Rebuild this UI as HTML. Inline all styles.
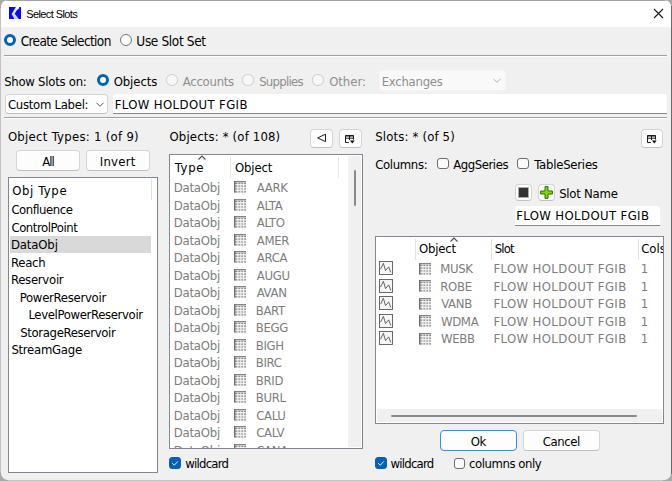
<!DOCTYPE html><html><head><meta charset="utf-8"><title>Select Slots</title><style>
*{box-sizing:border-box;margin:0;padding:0}
html,body{width:672px;height:481px;overflow:hidden;background:#a8a8a8}
body{font-family:"DejaVu Sans Condensed","DejaVu Sans","Liberation Sans",sans-serif;font-size:13px;color:#000;position:relative}
.win{position:absolute;left:1px;top:0;width:670px;height:480px;background:#f0f0f0;border-radius:7px;overflow:hidden}
.tb{position:absolute;left:0;top:0;width:100%;height:27px;background:#fff}
.t{position:absolute;white-space:nowrap;line-height:16px;height:16px}
.g{color:#7d7d7d}
.dis{color:#8f8f8f}
.sep{position:absolute;height:2px;border-top:1px solid #a0a0a0;border-bottom:1px solid #fff}
.radio{position:absolute;width:12px;height:12px;border-radius:50%;border:1px solid #767676;background:#fbfbfb}
.radio.on{border:3.9px solid #0560b6;background:#fff}
.radio.off{border-color:#cdcdcd;background:#f7f7f7;width:11.5px;height:11.5px}
.cb{position:absolute;width:11.5px;height:11.5px;border:1px solid #6c6c6c;border-radius:3px;background:#fafafa}
.cb.on{background:#0560b6;border-color:#0560b6}
.btn{position:absolute;background:#fdfdfd;border:1px solid #d4d4d4;border-bottom-color:#c0c0c0;border-radius:4px;text-align:center}
.box{position:absolute;background:#fff;border:1px solid #828790}
.le{position:absolute;background:#fff;border-bottom:1px solid #868686;border-radius:3px 3px 0 0}
</style></head><body><div class="win">
<div class="tb"></div><div style="position:absolute;left:0;top:0;width:100%;height:1px;background:#a2a2a2"></div>
<svg style="position:absolute;left:7.5px;top:6.5px" width="12.5" height="12.5" viewBox="0 0 12.5 12.5"><rect width="12.5" height="12.5" fill="#0808ff"/><defs><linearGradient id="rg" x1="0" y1="0" x2="0" y2="1"><stop offset="0" stop-color="#ffffff"/><stop offset="1" stop-color="#c4c4ff"/></linearGradient></defs><path d="M6.9 0 L10.3 0 L10 1.6 L7.6 3.4 L5.7 6.8 L10.3 12.5 L5.6 12.5 L2.6 7 Z" fill="url(#rg)"/></svg>
<svg style="position:absolute;left:652px;top:8px" width="11" height="11" viewBox="0 0 11 11"><path d="M1 1 L10 10 M10 1 L1 10" stroke="#1a1a1a" stroke-width="1.1" fill="none"/></svg>
<div class="t " style="left:25.15px;top:5.7px;font-size:11px;font-family:'Liberation Sans',sans-serif;letter-spacing:-0.58px;">Select Slots</div>
<div class="radio on" style="left:3px;top:34px"></div>
<div class="t " style="left:19.65px;top:32.9px;font-size:13.5px;letter-spacing:-0.63px;">Create Selection</div>
<div class="radio " style="left:119px;top:34px"></div>
<div class="t " style="left:135.35px;top:32.9px;font-size:13.5px;letter-spacing:-0.36px;">Use Slot Set</div>
<div class="sep" style="left:3px;top:55px;width:663px"></div>
<div class="t " style="left:3.15px;top:73.5px;letter-spacing:-0.26px;">Show Slots on:</div>
<div class="radio on" style="left:96px;top:74px"></div>
<div class="t " style="left:112.65px;top:73.5px;letter-spacing:-0.08px;">Objects</div>
<div class="radio off" style="left:165px;top:74px"></div>
<div class="t dis" style="left:181.75px;top:73.5px;letter-spacing:-0.26px;">Accounts</div>
<div class="radio off" style="left:241px;top:74px"></div>
<div class="t dis" style="left:258.15px;top:73.5px;letter-spacing:-0.72px;">Supplies</div>
<div class="radio off" style="left:311px;top:74px"></div>
<div class="t dis" style="left:328.15px;top:73.5px;letter-spacing:-0.04px;">Other:</div>
<div class="btn" style="left:378px;top:70px;width:126.5px;height:20.5px;background:#f9f9f9;border-color:#f4f4f4;border-radius:3px"></div>
<div class="t dis" style="left:380.7px;top:73.5px;letter-spacing:-0.25px;">Exchanges</div>
<svg style="position:absolute;left:492px;top:78px" width="9" height="6" viewBox="0 0 9 6"><path d="M0.5 0.8 L4 4.3 L7.5 0.8" stroke="#b0b0b0" stroke-width="1" fill="none"/></svg>
<div class="btn" style="left:4px;top:93.5px;width:103px;height:20.5px"></div>
<div class="t " style="left:6.9px;top:97px;letter-spacing:-0.28px;">Custom Label:</div>
<svg style="position:absolute;left:95px;top:102px" width="9" height="6" viewBox="0 0 9 6"><path d="M0.5 0.8 L4 4.3 L7.5 0.8" stroke="#505050" stroke-width="1" fill="none"/></svg>
<div class="le" style="left:112px;top:94px;width:554px;height:20px"></div>
<div class="t " style="left:113.7px;top:97px;letter-spacing:0.38px;">FLOW HOLDOUT FGIB</div>
<div class="sep" style="left:3px;top:117px;width:663px"></div>
<div class="t " style="left:6.9px;top:129.25px;letter-spacing:0.28px;">Object Types: 1 (of 9)</div>
<div class="t " style="left:168.45px;top:129.25px;letter-spacing:0.16px;">Objects: * (of 108)</div>
<div class="t " style="left:374.15px;top:129.25px;letter-spacing:0.17px;">Slots: * (of 5)</div>
<div class="btn" style="left:309px;top:129px;width:22.5px;height:19px"><svg width="11" height="11" viewBox="0 0 11 11" style="position:absolute;left:5px;top:3px"><path d="M9.5 1.2 L1.6 4.9 L9.5 8.6 Z" stroke="#222" stroke-width="1" fill="none"/></svg></div>
<div class="btn" style="left:338px;top:129px;width:23px;height:19px"><svg width="10" height="9" viewBox="0 0 10 9" style="position:absolute;left:5px;top:5px"><path d="M0.5 7.5 V0.5 H8.5 V4.6 M0.5 3.2 H8.5 M4.5 0.5 V5 M0.5 7.5 H3.8" stroke="#1c1c1c" stroke-width="1" fill="none"/><path d="M0 1.2 H9" stroke="#1c1c1c" stroke-width="0.8"/><path d="M4.9 5.5 L9.7 5.5 L7.3 8.5 Z" fill="#111"/></svg></div>
<div class="btn" style="left:640px;top:129px;width:22px;height:19px"><svg width="10" height="9" viewBox="0 0 10 9" style="position:absolute;left:5px;top:5px"><path d="M0.5 7.5 V0.5 H8.5 V4.6 M0.5 3.2 H8.5 M4.5 0.5 V5 M0.5 7.5 H3.8" stroke="#1c1c1c" stroke-width="1" fill="none"/><path d="M0 1.2 H9" stroke="#1c1c1c" stroke-width="0.8"/><path d="M4.9 5.5 L9.7 5.5 L7.3 8.5 Z" fill="#111"/></svg></div>
<div class="btn" style="left:15px;top:150px;width:64px;height:21px"></div>
<div class="t " style="left:41.25px;top:153.5px;letter-spacing:-1.03px;">All</div>
<div class="btn" style="left:85px;top:150px;width:64px;height:21px"></div>
<div class="t " style="left:98.7px;top:153.5px;letter-spacing:0.27px;">Invert</div>
<div class="box" style="left:7px;top:177px;width:150px;height:296px"></div>
<div style="position:absolute;left:150px;top:179px;width:1px;height:21px;background:#e0e0e0"></div>
<div class="t " style="left:11.15px;top:182.5px;letter-spacing:0.6px;">Obj Type</div>
<div class="t " style="left:10.4px;top:202.2px;letter-spacing:-0.48px;">Confluence</div>
<div class="t " style="left:10.4px;top:219.7px;letter-spacing:-0.43px;">ControlPoint</div>
<div style="position:absolute;left:9px;top:236px;width:141px;height:17px;background:#d9d9d9"></div>
<div class="t " style="left:9.95px;top:237.2px;letter-spacing:-0.14px;">DataObj</div>
<div class="t " style="left:9.95px;top:254.7px;letter-spacing:-0.26px;">Reach</div>
<div class="t " style="left:9.95px;top:272.2px;letter-spacing:-0.28px;">Reservoir</div>
<div class="t " style="left:18.7px;top:289.7px;letter-spacing:-0.29px;">PowerReservoir</div>
<div class="t " style="left:27.45px;top:307.2px;letter-spacing:-0.36px;">LevelPowerReservoir</div>
<div class="t " style="left:19.15px;top:324.7px;letter-spacing:-0.34px;">StorageReservoir</div>
<div class="t " style="left:10.4px;top:342.2px;letter-spacing:-0.27px;">StreamGage</div>
<div class="box" style="left:168px;top:154px;width:194px;height:295px;overflow:hidden">
<div style="position:absolute;left:178px;top:1px;width:13px;height:291px;background:#f0f0f0"></div>
<div style="position:absolute;left:184px;top:15px;width:2px;height:36px;background:#8a8a8a;border-radius:1px"></div>
<div style="position:absolute;left:60px;top:2px;width:1px;height:21px;background:#e4e4e4"></div>
<div style="position:absolute;left:168px;top:2px;width:1px;height:21px;background:#e4e4e4"></div>
<svg style="position:absolute;left:28px;top:0px" width="9" height="5" viewBox="0 0 9 5"><path d="M0.5 4.5 L4 1 L7.5 4.5" stroke="#4a4a4a" stroke-width="1.1" fill="none"/></svg>
<div class="t g" style="left:3.7px;top:25px;letter-spacing:-0.19px;">DataObj</div>
<svg style="position:absolute;left:64.2px;top:26.1px" width="12" height="12" viewBox="0 0 12 12"><rect x="0" y="0" width="12" height="11.6" fill="#e9e9e9"/><path d="M1 2.4 H12 M1 5.2 H12 M1 8 H12 M1 10.8 H12" stroke="#8e8e8e" stroke-width="1.2" fill="none"/><path d="M3.9 1.4 V12 M6.8 1.4 V12 M9.6 1.4 V12" stroke="#fafafa" stroke-width="0.9"/><path d="M0 0.6 H12" stroke="#858585" stroke-width="1.2"/><path d="M0.7 0 V11.6" stroke="#707070" stroke-width="1.4"/></svg>
<div class="t g" style="left:86.75px;top:25px;letter-spacing:-0.3px;">AARK</div>
<div class="t g" style="left:3.7px;top:42.5px;letter-spacing:-0.19px;">DataObj</div>
<svg style="position:absolute;left:64.2px;top:43.6px" width="12" height="12" viewBox="0 0 12 12"><rect x="0" y="0" width="12" height="11.6" fill="#e9e9e9"/><path d="M1 2.4 H12 M1 5.2 H12 M1 8 H12 M1 10.8 H12" stroke="#8e8e8e" stroke-width="1.2" fill="none"/><path d="M3.9 1.4 V12 M6.8 1.4 V12 M9.6 1.4 V12" stroke="#fafafa" stroke-width="0.9"/><path d="M0 0.6 H12" stroke="#858585" stroke-width="1.2"/><path d="M0.7 0 V11.6" stroke="#707070" stroke-width="1.4"/></svg>
<div class="t g" style="left:86.75px;top:42.5px;letter-spacing:-0.3px;">ALTA</div>
<div class="t g" style="left:3.7px;top:60px;letter-spacing:-0.19px;">DataObj</div>
<svg style="position:absolute;left:64.2px;top:61.1px" width="12" height="12" viewBox="0 0 12 12"><rect x="0" y="0" width="12" height="11.6" fill="#e9e9e9"/><path d="M1 2.4 H12 M1 5.2 H12 M1 8 H12 M1 10.8 H12" stroke="#8e8e8e" stroke-width="1.2" fill="none"/><path d="M3.9 1.4 V12 M6.8 1.4 V12 M9.6 1.4 V12" stroke="#fafafa" stroke-width="0.9"/><path d="M0 0.6 H12" stroke="#858585" stroke-width="1.2"/><path d="M0.7 0 V11.6" stroke="#707070" stroke-width="1.4"/></svg>
<div class="t g" style="left:86.75px;top:60px;letter-spacing:-0.3px;">ALTO</div>
<div class="t g" style="left:3.7px;top:77.5px;letter-spacing:-0.19px;">DataObj</div>
<svg style="position:absolute;left:64.2px;top:78.6px" width="12" height="12" viewBox="0 0 12 12"><rect x="0" y="0" width="12" height="11.6" fill="#e9e9e9"/><path d="M1 2.4 H12 M1 5.2 H12 M1 8 H12 M1 10.8 H12" stroke="#8e8e8e" stroke-width="1.2" fill="none"/><path d="M3.9 1.4 V12 M6.8 1.4 V12 M9.6 1.4 V12" stroke="#fafafa" stroke-width="0.9"/><path d="M0 0.6 H12" stroke="#858585" stroke-width="1.2"/><path d="M0.7 0 V11.6" stroke="#707070" stroke-width="1.4"/></svg>
<div class="t g" style="left:86.75px;top:77.5px;letter-spacing:-0.3px;">AMER</div>
<div class="t g" style="left:3.7px;top:95px;letter-spacing:-0.19px;">DataObj</div>
<svg style="position:absolute;left:64.2px;top:96.1px" width="12" height="12" viewBox="0 0 12 12"><rect x="0" y="0" width="12" height="11.6" fill="#e9e9e9"/><path d="M1 2.4 H12 M1 5.2 H12 M1 8 H12 M1 10.8 H12" stroke="#8e8e8e" stroke-width="1.2" fill="none"/><path d="M3.9 1.4 V12 M6.8 1.4 V12 M9.6 1.4 V12" stroke="#fafafa" stroke-width="0.9"/><path d="M0 0.6 H12" stroke="#858585" stroke-width="1.2"/><path d="M0.7 0 V11.6" stroke="#707070" stroke-width="1.4"/></svg>
<div class="t g" style="left:86.75px;top:95px;letter-spacing:-0.3px;">ARCA</div>
<div class="t g" style="left:3.7px;top:112.5px;letter-spacing:-0.19px;">DataObj</div>
<svg style="position:absolute;left:64.2px;top:113.6px" width="12" height="12" viewBox="0 0 12 12"><rect x="0" y="0" width="12" height="11.6" fill="#e9e9e9"/><path d="M1 2.4 H12 M1 5.2 H12 M1 8 H12 M1 10.8 H12" stroke="#8e8e8e" stroke-width="1.2" fill="none"/><path d="M3.9 1.4 V12 M6.8 1.4 V12 M9.6 1.4 V12" stroke="#fafafa" stroke-width="0.9"/><path d="M0 0.6 H12" stroke="#858585" stroke-width="1.2"/><path d="M0.7 0 V11.6" stroke="#707070" stroke-width="1.4"/></svg>
<div class="t g" style="left:86.75px;top:112.5px;letter-spacing:-0.3px;">AUGU</div>
<div class="t g" style="left:3.7px;top:130px;letter-spacing:-0.19px;">DataObj</div>
<svg style="position:absolute;left:64.2px;top:131.1px" width="12" height="12" viewBox="0 0 12 12"><rect x="0" y="0" width="12" height="11.6" fill="#e9e9e9"/><path d="M1 2.4 H12 M1 5.2 H12 M1 8 H12 M1 10.8 H12" stroke="#8e8e8e" stroke-width="1.2" fill="none"/><path d="M3.9 1.4 V12 M6.8 1.4 V12 M9.6 1.4 V12" stroke="#fafafa" stroke-width="0.9"/><path d="M0 0.6 H12" stroke="#858585" stroke-width="1.2"/><path d="M0.7 0 V11.6" stroke="#707070" stroke-width="1.4"/></svg>
<div class="t g" style="left:86.75px;top:130px;letter-spacing:-0.3px;">AVAN</div>
<div class="t g" style="left:3.7px;top:147.5px;letter-spacing:-0.19px;">DataObj</div>
<svg style="position:absolute;left:64.2px;top:148.6px" width="12" height="12" viewBox="0 0 12 12"><rect x="0" y="0" width="12" height="11.6" fill="#e9e9e9"/><path d="M1 2.4 H12 M1 5.2 H12 M1 8 H12 M1 10.8 H12" stroke="#8e8e8e" stroke-width="1.2" fill="none"/><path d="M3.9 1.4 V12 M6.8 1.4 V12 M9.6 1.4 V12" stroke="#fafafa" stroke-width="0.9"/><path d="M0 0.6 H12" stroke="#858585" stroke-width="1.2"/><path d="M0.7 0 V11.6" stroke="#707070" stroke-width="1.4"/></svg>
<div class="t g" style="left:85.7px;top:147.5px;letter-spacing:-0.3px;">BART</div>
<div class="t g" style="left:3.7px;top:165px;letter-spacing:-0.19px;">DataObj</div>
<svg style="position:absolute;left:64.2px;top:166.1px" width="12" height="12" viewBox="0 0 12 12"><rect x="0" y="0" width="12" height="11.6" fill="#e9e9e9"/><path d="M1 2.4 H12 M1 5.2 H12 M1 8 H12 M1 10.8 H12" stroke="#8e8e8e" stroke-width="1.2" fill="none"/><path d="M3.9 1.4 V12 M6.8 1.4 V12 M9.6 1.4 V12" stroke="#fafafa" stroke-width="0.9"/><path d="M0 0.6 H12" stroke="#858585" stroke-width="1.2"/><path d="M0.7 0 V11.6" stroke="#707070" stroke-width="1.4"/></svg>
<div class="t g" style="left:85.7px;top:165px;letter-spacing:-0.3px;">BEGG</div>
<div class="t g" style="left:3.7px;top:182.5px;letter-spacing:-0.19px;">DataObj</div>
<svg style="position:absolute;left:64.2px;top:183.6px" width="12" height="12" viewBox="0 0 12 12"><rect x="0" y="0" width="12" height="11.6" fill="#e9e9e9"/><path d="M1 2.4 H12 M1 5.2 H12 M1 8 H12 M1 10.8 H12" stroke="#8e8e8e" stroke-width="1.2" fill="none"/><path d="M3.9 1.4 V12 M6.8 1.4 V12 M9.6 1.4 V12" stroke="#fafafa" stroke-width="0.9"/><path d="M0 0.6 H12" stroke="#858585" stroke-width="1.2"/><path d="M0.7 0 V11.6" stroke="#707070" stroke-width="1.4"/></svg>
<div class="t g" style="left:85.7px;top:182.5px;letter-spacing:-0.3px;">BIGH</div>
<div class="t g" style="left:3.7px;top:200px;letter-spacing:-0.19px;">DataObj</div>
<svg style="position:absolute;left:64.2px;top:201.1px" width="12" height="12" viewBox="0 0 12 12"><rect x="0" y="0" width="12" height="11.6" fill="#e9e9e9"/><path d="M1 2.4 H12 M1 5.2 H12 M1 8 H12 M1 10.8 H12" stroke="#8e8e8e" stroke-width="1.2" fill="none"/><path d="M3.9 1.4 V12 M6.8 1.4 V12 M9.6 1.4 V12" stroke="#fafafa" stroke-width="0.9"/><path d="M0 0.6 H12" stroke="#858585" stroke-width="1.2"/><path d="M0.7 0 V11.6" stroke="#707070" stroke-width="1.4"/></svg>
<div class="t g" style="left:85.7px;top:200px;letter-spacing:-0.3px;">BIRC</div>
<div class="t g" style="left:3.7px;top:217.5px;letter-spacing:-0.19px;">DataObj</div>
<svg style="position:absolute;left:64.2px;top:218.6px" width="12" height="12" viewBox="0 0 12 12"><rect x="0" y="0" width="12" height="11.6" fill="#e9e9e9"/><path d="M1 2.4 H12 M1 5.2 H12 M1 8 H12 M1 10.8 H12" stroke="#8e8e8e" stroke-width="1.2" fill="none"/><path d="M3.9 1.4 V12 M6.8 1.4 V12 M9.6 1.4 V12" stroke="#fafafa" stroke-width="0.9"/><path d="M0 0.6 H12" stroke="#858585" stroke-width="1.2"/><path d="M0.7 0 V11.6" stroke="#707070" stroke-width="1.4"/></svg>
<div class="t g" style="left:85.7px;top:217.5px;letter-spacing:-0.3px;">BRID</div>
<div class="t g" style="left:3.7px;top:235px;letter-spacing:-0.19px;">DataObj</div>
<svg style="position:absolute;left:64.2px;top:236.1px" width="12" height="12" viewBox="0 0 12 12"><rect x="0" y="0" width="12" height="11.6" fill="#e9e9e9"/><path d="M1 2.4 H12 M1 5.2 H12 M1 8 H12 M1 10.8 H12" stroke="#8e8e8e" stroke-width="1.2" fill="none"/><path d="M3.9 1.4 V12 M6.8 1.4 V12 M9.6 1.4 V12" stroke="#fafafa" stroke-width="0.9"/><path d="M0 0.6 H12" stroke="#858585" stroke-width="1.2"/><path d="M0.7 0 V11.6" stroke="#707070" stroke-width="1.4"/></svg>
<div class="t g" style="left:85.7px;top:235px;letter-spacing:-0.3px;">BURL</div>
<div class="t g" style="left:3.7px;top:252.5px;letter-spacing:-0.19px;">DataObj</div>
<svg style="position:absolute;left:64.2px;top:253.6px" width="12" height="12" viewBox="0 0 12 12"><rect x="0" y="0" width="12" height="11.6" fill="#e9e9e9"/><path d="M1 2.4 H12 M1 5.2 H12 M1 8 H12 M1 10.8 H12" stroke="#8e8e8e" stroke-width="1.2" fill="none"/><path d="M3.9 1.4 V12 M6.8 1.4 V12 M9.6 1.4 V12" stroke="#fafafa" stroke-width="0.9"/><path d="M0 0.6 H12" stroke="#858585" stroke-width="1.2"/><path d="M0.7 0 V11.6" stroke="#707070" stroke-width="1.4"/></svg>
<div class="t g" style="left:86.15px;top:252.5px;letter-spacing:-0.3px;">CALU</div>
<div class="t g" style="left:3.7px;top:270px;letter-spacing:-0.19px;">DataObj</div>
<svg style="position:absolute;left:64.2px;top:271.1px" width="12" height="12" viewBox="0 0 12 12"><rect x="0" y="0" width="12" height="11.6" fill="#e9e9e9"/><path d="M1 2.4 H12 M1 5.2 H12 M1 8 H12 M1 10.8 H12" stroke="#8e8e8e" stroke-width="1.2" fill="none"/><path d="M3.9 1.4 V12 M6.8 1.4 V12 M9.6 1.4 V12" stroke="#fafafa" stroke-width="0.9"/><path d="M0 0.6 H12" stroke="#858585" stroke-width="1.2"/><path d="M0.7 0 V11.6" stroke="#707070" stroke-width="1.4"/></svg>
<div class="t g" style="left:86.15px;top:270px;letter-spacing:-0.3px;">CALV</div>
<div class="t g" style="left:3.7px;top:287.5px;letter-spacing:-0.19px;">DataObj</div>
<svg style="position:absolute;left:64.2px;top:288.6px" width="12" height="12" viewBox="0 0 12 12"><rect x="0" y="0" width="12" height="11.6" fill="#e9e9e9"/><path d="M1 2.4 H12 M1 5.2 H12 M1 8 H12 M1 10.8 H12" stroke="#8e8e8e" stroke-width="1.2" fill="none"/><path d="M3.9 1.4 V12 M6.8 1.4 V12 M9.6 1.4 V12" stroke="#fafafa" stroke-width="0.9"/><path d="M0 0.6 H12" stroke="#858585" stroke-width="1.2"/><path d="M0.7 0 V11.6" stroke="#707070" stroke-width="1.4"/></svg>
<div class="t g" style="left:86.15px;top:287.5px;letter-spacing:-0.3px;">CANA</div>
</div>
<div class="t " style="left:173.75px;top:159.5px;letter-spacing:0.71px;">Type</div>
<div class="t " style="left:234.05px;top:159.5px;letter-spacing:-0.18px;">Object</div>
<div class="cb on" style="left:168px;top:457.2px"><svg width="10" height="10" viewBox="0 0 10 10" style="position:absolute;left:0;top:0"><path d="M2.2 5.2 L4.3 7.2 L7.8 3.4" stroke="#e8f0fa" stroke-width="1" fill="none"/></svg></div>
<div class="t " style="left:184.3px;top:456.4px;letter-spacing:-0.77px;">wildcard</div>
<div class="t " style="left:374.15px;top:157.25px;letter-spacing:-0.34px;">Columns:</div>
<div class="cb" style="left:436.0px;top:157.8px"></div>
<div class="t " style="left:452.25px;top:157.25px;letter-spacing:-0.45px;">AggSeries</div>
<div class="cb" style="left:516.0px;top:157.8px"></div>
<div class="t " style="left:533.25px;top:157.25px;letter-spacing:-0.23px;">TableSeries</div>
<div class="btn" style="left:514px;top:184px;width:17px;height:17px"><div style="position:absolute;left:2px;top:2px;width:11px;height:11px;background:#333;border:1.5px solid #aaa"></div></div>
<div class="btn" style="left:537px;top:184px;width:17px;height:17px"><svg width="13" height="13" viewBox="0 0 13 13" style="position:absolute;left:1px;top:1.2px"><path d="M5 0.6 H8 V5 H12.4 V8 H8 V12.4 H5 V8 H0.6 V5 H5 Z" fill="#86d400" stroke="#2a6e12" stroke-width="1"/></svg></div>
<div class="t " style="left:558.15px;top:185.5px;letter-spacing:-0.24px;">Slot Name</div>
<div class="le" style="left:513.5px;top:206px;width:145px;height:19.5px"></div>
<div class="t " style="left:515.2px;top:208px;letter-spacing:0.38px;">FLOW HOLDOUT FGIB</div>
<div class="box" style="left:374px;top:235.5px;width:289px;height:188px;overflow:hidden">
<div style="position:absolute;left:1px;top:172.5px;width:285px;height:13px;background:#f0f0f0"></div>
<div style="position:absolute;left:15px;top:178.5px;width:246px;height:2px;background:#8a8a8a;border-radius:1px"></div>
<svg style="position:absolute;left:74px;top:0px" width="9" height="5" viewBox="0 0 9 5"><path d="M0.5 4.5 L4 1 L7.5 4.5" stroke="#4a4a4a" stroke-width="1.1" fill="none"/></svg>
<div style="position:absolute;left:39px;top:2px;width:1px;height:21px;background:#e2e2e2"></div>
<div style="position:absolute;left:115px;top:2px;width:1px;height:21px;background:#e2e2e2"></div>
<div style="position:absolute;left:261.5px;top:2px;width:1px;height:21px;background:#e2e2e2"></div>
<svg style="position:absolute;left:2.9px;top:24.5px" width="14" height="14" viewBox="0 0 14 14"><rect x="0.5" y="0.5" width="13" height="13" fill="#f6f6f6" stroke="#5a5a5a" stroke-width="0.9"/><path d="M1.5 8.2 L4.4 2.3 L6.5 9.6 L9.7 5.9 L11.75 11.4" stroke="#555" stroke-width="0.9" fill="none"/></svg>
<svg style="position:absolute;left:42.6px;top:26.1px" width="12" height="12" viewBox="0 0 12 12"><rect x="0" y="0" width="12" height="11.6" fill="#e9e9e9"/><path d="M1 2.4 H12 M1 5.2 H12 M1 8 H12 M1 10.8 H12" stroke="#8e8e8e" stroke-width="1.2" fill="none"/><path d="M3.9 1.4 V12 M6.8 1.4 V12 M9.6 1.4 V12" stroke="#fafafa" stroke-width="0.9"/><path d="M0 0.6 H12" stroke="#858585" stroke-width="1.2"/><path d="M0.7 0 V11.6" stroke="#707070" stroke-width="1.4"/></svg>
<div class="t g" style="left:64.2px;top:24.5px;letter-spacing:-0.3px;">MUSK</div>
<div class="t g" style="left:117.45px;top:24.5px;letter-spacing:0.38px;">FLOW HOLDOUT FGIB</div>
<div class="t g" style="left:264.7px;top:24.5px;">1</div>
<svg style="position:absolute;left:2.9px;top:42px" width="14" height="14" viewBox="0 0 14 14"><rect x="0.5" y="0.5" width="13" height="13" fill="#f6f6f6" stroke="#5a5a5a" stroke-width="0.9"/><path d="M1.5 8.2 L4.4 2.3 L6.5 9.6 L9.7 5.9 L11.75 11.4" stroke="#555" stroke-width="0.9" fill="none"/></svg>
<svg style="position:absolute;left:42.6px;top:43.6px" width="12" height="12" viewBox="0 0 12 12"><rect x="0" y="0" width="12" height="11.6" fill="#e9e9e9"/><path d="M1 2.4 H12 M1 5.2 H12 M1 8 H12 M1 10.8 H12" stroke="#8e8e8e" stroke-width="1.2" fill="none"/><path d="M3.9 1.4 V12 M6.8 1.4 V12 M9.6 1.4 V12" stroke="#fafafa" stroke-width="0.9"/><path d="M0 0.6 H12" stroke="#858585" stroke-width="1.2"/><path d="M0.7 0 V11.6" stroke="#707070" stroke-width="1.4"/></svg>
<div class="t g" style="left:64.2px;top:42px;letter-spacing:-0.3px;">ROBE</div>
<div class="t g" style="left:117.45px;top:42px;letter-spacing:0.38px;">FLOW HOLDOUT FGIB</div>
<div class="t g" style="left:264.7px;top:42px;">1</div>
<svg style="position:absolute;left:2.9px;top:59.5px" width="14" height="14" viewBox="0 0 14 14"><rect x="0.5" y="0.5" width="13" height="13" fill="#f6f6f6" stroke="#5a5a5a" stroke-width="0.9"/><path d="M1.5 8.2 L4.4 2.3 L6.5 9.6 L9.7 5.9 L11.75 11.4" stroke="#555" stroke-width="0.9" fill="none"/></svg>
<svg style="position:absolute;left:42.6px;top:61.1px" width="12" height="12" viewBox="0 0 12 12"><rect x="0" y="0" width="12" height="11.6" fill="#e9e9e9"/><path d="M1 2.4 H12 M1 5.2 H12 M1 8 H12 M1 10.8 H12" stroke="#8e8e8e" stroke-width="1.2" fill="none"/><path d="M3.9 1.4 V12 M6.8 1.4 V12 M9.6 1.4 V12" stroke="#fafafa" stroke-width="0.9"/><path d="M0 0.6 H12" stroke="#858585" stroke-width="1.2"/><path d="M0.7 0 V11.6" stroke="#707070" stroke-width="1.4"/></svg>
<div class="t g" style="left:65.25px;top:59.5px;letter-spacing:-0.3px;">VANB</div>
<div class="t g" style="left:117.45px;top:59.5px;letter-spacing:0.38px;">FLOW HOLDOUT FGIB</div>
<div class="t g" style="left:264.7px;top:59.5px;">1</div>
<svg style="position:absolute;left:2.9px;top:77px" width="14" height="14" viewBox="0 0 14 14"><rect x="0.5" y="0.5" width="13" height="13" fill="#f6f6f6" stroke="#5a5a5a" stroke-width="0.9"/><path d="M1.5 8.2 L4.4 2.3 L6.5 9.6 L9.7 5.9 L11.75 11.4" stroke="#555" stroke-width="0.9" fill="none"/></svg>
<svg style="position:absolute;left:42.6px;top:78.6px" width="12" height="12" viewBox="0 0 12 12"><rect x="0" y="0" width="12" height="11.6" fill="#e9e9e9"/><path d="M1 2.4 H12 M1 5.2 H12 M1 8 H12 M1 10.8 H12" stroke="#8e8e8e" stroke-width="1.2" fill="none"/><path d="M3.9 1.4 V12 M6.8 1.4 V12 M9.6 1.4 V12" stroke="#fafafa" stroke-width="0.9"/><path d="M0 0.6 H12" stroke="#858585" stroke-width="1.2"/><path d="M0.7 0 V11.6" stroke="#707070" stroke-width="1.4"/></svg>
<div class="t g" style="left:64.9px;top:77px;letter-spacing:-0.3px;">WDMA</div>
<div class="t g" style="left:117.45px;top:77px;letter-spacing:0.38px;">FLOW HOLDOUT FGIB</div>
<div class="t g" style="left:264.7px;top:77px;">1</div>
<svg style="position:absolute;left:2.9px;top:94.5px" width="14" height="14" viewBox="0 0 14 14"><rect x="0.5" y="0.5" width="13" height="13" fill="#f6f6f6" stroke="#5a5a5a" stroke-width="0.9"/><path d="M1.5 8.2 L4.4 2.3 L6.5 9.6 L9.7 5.9 L11.75 11.4" stroke="#555" stroke-width="0.9" fill="none"/></svg>
<svg style="position:absolute;left:42.6px;top:96.1px" width="12" height="12" viewBox="0 0 12 12"><rect x="0" y="0" width="12" height="11.6" fill="#e9e9e9"/><path d="M1 2.4 H12 M1 5.2 H12 M1 8 H12 M1 10.8 H12" stroke="#8e8e8e" stroke-width="1.2" fill="none"/><path d="M3.9 1.4 V12 M6.8 1.4 V12 M9.6 1.4 V12" stroke="#fafafa" stroke-width="0.9"/><path d="M0 0.6 H12" stroke="#858585" stroke-width="1.2"/><path d="M0.7 0 V11.6" stroke="#707070" stroke-width="1.4"/></svg>
<div class="t g" style="left:64.9px;top:94.5px;letter-spacing:-0.3px;">WEBB</div>
<div class="t g" style="left:117.45px;top:94.5px;letter-spacing:0.38px;">FLOW HOLDOUT FGIB</div>
<div class="t g" style="left:264.7px;top:94.5px;">1</div>
<div class="t " style="left:42.9px;top:4px;letter-spacing:-0.18px;">Object</div>
<div class="t " style="left:118.65px;top:4px;letter-spacing:-0.82px;">Slot</div>
<div class="t " style="left:265.15px;top:4px;">Cols</div>
</div>
<div class="btn" style="left:439px;top:430px;width:77px;height:21px;border:1px solid #3a8ee0"></div>
<div class="t " style="left:469.65px;top:433.5px;letter-spacing:-0.28px;">Ok</div>
<div class="btn" style="left:522px;top:430px;width:77px;height:21px"></div>
<div class="t " style="left:541.65px;top:433.5px;letter-spacing:-0.39px;">Cancel</div>
<div class="cb on" style="left:374px;top:457.2px"><svg width="10" height="10" viewBox="0 0 10 10" style="position:absolute;left:0;top:0"><path d="M2.2 5.2 L4.3 7.2 L7.8 3.4" stroke="#e8f0fa" stroke-width="1" fill="none"/></svg></div>
<div class="t " style="left:389.5px;top:456.4px;letter-spacing:-0.77px;">wildcard</div>
<div class="cb" style="left:452.5px;top:457.8px"></div>
<div class="t " style="left:468.05px;top:456.4px;letter-spacing:-0.45px;">columns only</div>
</div><div style="position:absolute;left:0;top:8px;width:1px;height:464px;background:#c6c0c6"></div><div style="position:absolute;left:671px;top:6px;width:1px;height:468px;background:#6a6a6a"></div><div style="position:absolute;left:8px;top:480px;width:655px;height:1px;background:#c4c4c4"></div></body></html>
